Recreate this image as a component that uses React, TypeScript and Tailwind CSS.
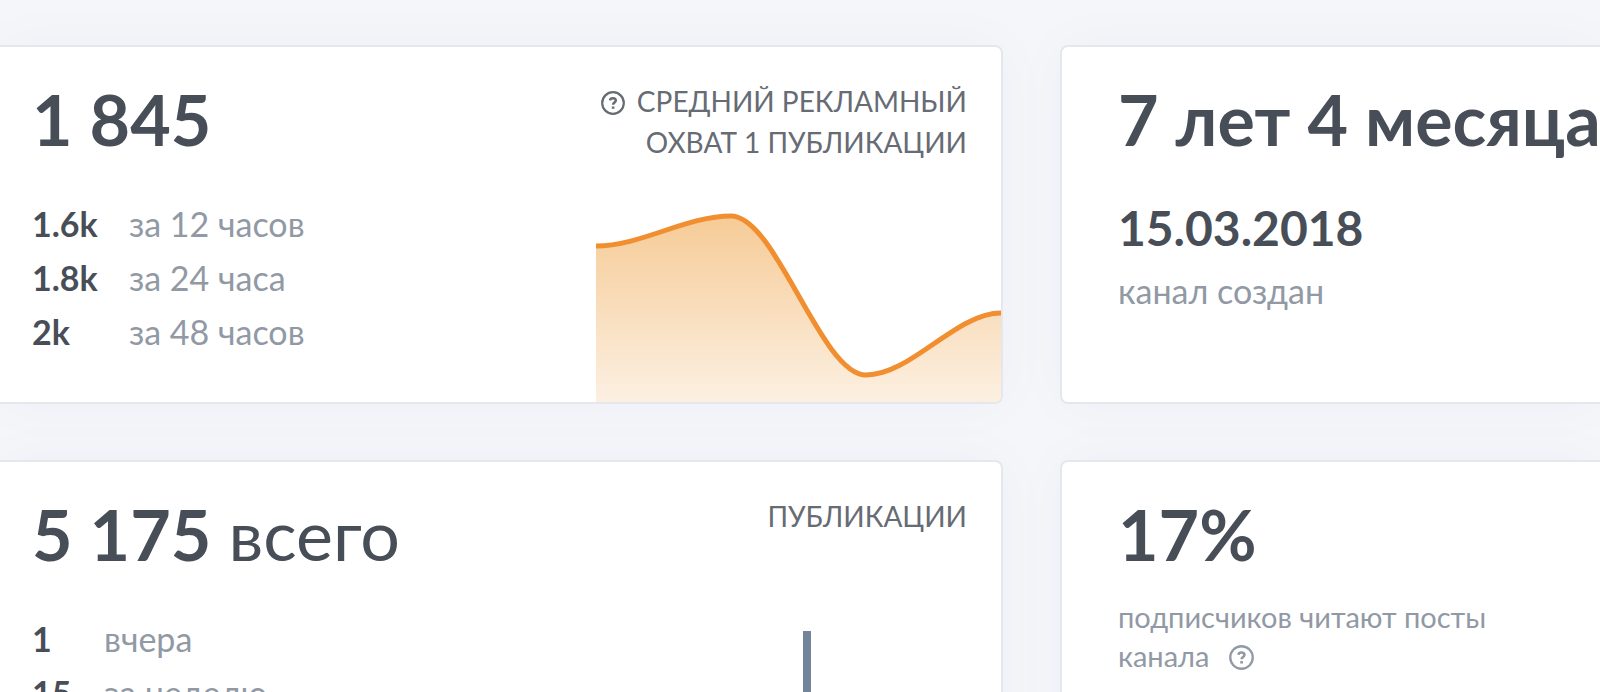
import type { ReactNode } from 'react'

interface Stat {
  value: string
  label: string
}

const reach: Stat[] = [
  { value: '1.6k', label: 'за 12 часов' },
  { value: '1.8k', label: 'за 24 часа' },
  { value: '2k', label: 'за 48 часов' },
]

const posts: Stat[] = [
  { value: '1', label: 'вчера' },
  { value: '15', label: 'за неделю' },
]

function HelpIcon({ className }: { className?: string }) {
  return (
    <svg viewBox="0 0 24 24" fill="none" stroke="currentColor" className={className} aria-hidden="true">
      <circle cx="12" cy="12" r="10.8" strokeWidth="2.2" />
      <path d="M9 9.4C9.2 8 10.3 7.2 12 7.2s2.8 1 2.8 2.3c0 2-2.7 2.1-2.7 4.2" strokeWidth="2.5" />
      <path d="M12.1 15.4v2.4" strokeWidth="2.6" />
    </svg>
  )
}

function Card({ className, children }: { className: string; children: ReactNode }) {
  return (
    <section
      className={`flex min-w-0 overflow-hidden border-2 border-[#e4e8ec] bg-white shadow-[0_0_60px_rgba(40,50,80,0.03)] ${className}`}
    >
      {children}
    </section>
  )
}

function StatTable({ stats, className }: { stats: Stat[]; className: string }) {
  return (
    <table className="mt-9 text-left text-[34px] leading-[54px]">
      <tbody>
        {stats.map((s) => (
          <tr key={s.label}>
            <th scope="row" className={`p-0 font-bold ${className}`}>{s.value}</th>
            <td className="p-0 whitespace-nowrap text-[#9199a4]">{s.label}</td>
          </tr>
        ))}
      </tbody>
    </table>
  )
}

function ReachChart() {
  return (
    <svg viewBox="0 0 405 190" preserveAspectRatio="none" className="block h-[190px] w-full" role="img" aria-label="Охват">
      <defs>
        <linearGradient id="reach" x1="0" y1="0" x2="0" y2="1">
          <stop offset="0" stopColor="#f6cb97" />
          <stop offset="1" stopColor="#fcf0e2" />
        </linearGradient>
      </defs>
      <path d="M0 34C45 34 90 4 135 4C180 4 225 163 270 163C315 163 360 101 405 101V190H0Z" fill="url(#reach)" />
      <path d="M0 34C45 34 90 4 135 4C180 4 225 163 270 163C315 163 360 101 405 101" fill="none" stroke="#f18e30" strokeWidth="5" />
    </svg>
  )
}

export default function App() {
  return (
    <main className="h-screen overflow-hidden bg-[#f4f6fa] pt-[45px] font-['Lato','Noto_Sans',sans-serif] text-[#484e57]">
      <div className="grid grid-cols-[13fr_7fr] gap-x-[57px] gap-y-14">
        <Card className="h-[359px] justify-between rounded-r-lg border-l-0">
          <div className="pt-[30px] pl-8">
            <h2 className="text-[70px] leading-[84px] font-bold">1 845</h2>
            <StatTable stats={reach} className="w-[97px]" />
          </div>
          <div className="flex w-[405px] flex-col justify-between">
            <h3 className="pt-[34px] pr-[34px] text-right text-[28px] leading-[41px] whitespace-nowrap uppercase text-[#666b74]">
              <HelpIcon className="mr-3 inline-block size-6 align-[-3px]" />
              Средний рекламный
              <br />
              охват 1 публикации
            </h3>
            <ReachChart />
          </div>
        </Card>

        <Card className="flex-col rounded-l-lg border-r-0 pt-[30px] pl-[56px]">
          <h2 className="text-[70px] leading-[84px] font-bold whitespace-nowrap">7 лет 4 месяца</h2>
          <p className="mt-[37px] text-[48px] leading-[60px] font-bold">15.03.2018</p>
          <p className="mt-1.5 text-[34px] leading-[54px] text-[#9199a4]">канал создан</p>
        </Card>

        <Card className="h-[359px] justify-between rounded-r-lg border-l-0">
          <div className="pt-[30px] pl-8">
            <h2 className="text-[70px] leading-[84px] font-bold">
              5 175 <span className="font-normal">всего</span>
            </h2>
            <StatTable stats={posts} className="w-[72px]" />
          </div>
          <div className="flex w-[405px] flex-col">
            <h3 className="pt-[34px] pr-[34px] text-right text-[28px] leading-[41px] uppercase text-[#666b74]">
              Публикации
            </h3>
            <div className="mt-[94px] ml-[207px] w-2 flex-1 bg-[#73859a]" />
          </div>
        </Card>

        <Card className="flex-col rounded-l-lg border-r-0 pt-[30px] pl-[56px]">
          <h2 className="text-[70px] leading-[84px] font-bold">17%</h2>
          <p className="mt-[21px] text-[29px] leading-[39px] text-[#9199a4]">
            подписчиков читают посты
            <br />
            канала
            <button type="button" aria-label="Подробнее" className="ml-5 align-[-3px]">
              <HelpIcon className="size-[25px]" />
            </button>
          </p>
        </Card>
      </div>
    </main>
  )
}
